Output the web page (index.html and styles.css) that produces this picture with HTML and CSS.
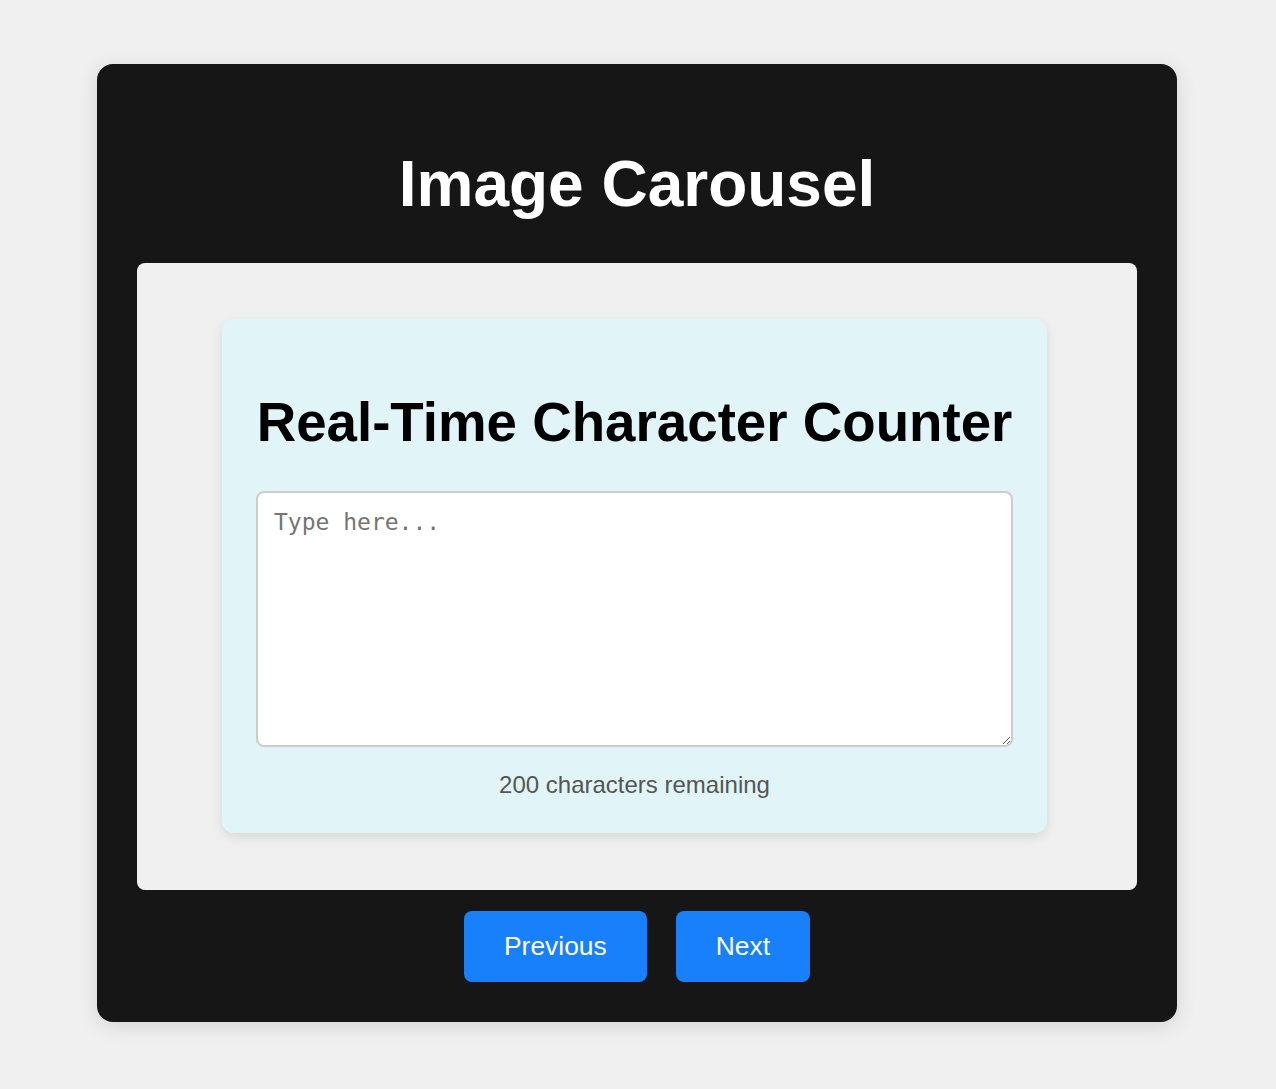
FILE: index.html
```html
<!DOCTYPE html>
<html lang="en">
<head>
<meta charset="utf-8">
<title>Image Carousel</title>
<link rel="stylesheet" href="styles.css">
</head>
<body>
  <div class="carousel">
    <h1 class="carousel-title">Image Carousel</h1>
    <div class="slide">
      <div class="counter-card">
        <h1 class="counter-title">Real-Time Character Counter</h1>
        <textarea class="counter-input" placeholder="Type here..." maxlength="200"></textarea>
        <p class="counter-remaining">200 characters remaining</p>
      </div>
    </div>
    <div class="controls">
      <button class="nav-btn">Previous</button>
      <button class="nav-btn">Next</button>
    </div>
  </div>
</body>
</html>
```

FILE: styles.css
```css
html, body {
  margin: 0;
  padding: 0;
}
body {
  background: #f0f0f0;
  font-family: "Liberation Sans", Arial, sans-serif;
  padding: 64px 2px 67px 0;
}
.carousel {
  width: 1080px;
  box-sizing: border-box;
  margin: 0 auto;
  padding: 40px;
  background: #161616;
  border-radius: 16px;
  box-shadow: 0 4px 20px rgba(0, 0, 0, 0.12);
}
.carousel-title {
  margin: 43px 0 42.4px;
  font-size: 64px;
  font-weight: bold;
  color: #ffffff;
  text-align: center;
}
.slide {
  height: 627px;
  box-sizing: border-box;
  padding: 56px 90px 59px 85px;
  margin-bottom: 21px;
  background: #f0f0f0;
  border-radius: 8px;
}
.counter-card {
  background: #e1f5f9;
  border-radius: 12px;
  padding: 0 34px 34px;
  box-shadow: 0 4px 12px rgba(0, 0, 0, 0.1);
  display: flow-root;
}
.counter-title {
  margin: 71px 0 36.5px;
  font-size: 54.7px;
  font-weight: bold;
  color: #000;
  text-align: center;
  white-space: nowrap;
}
.counter-input {
  display: block;
  width: 100%;
  height: 256px;
  box-sizing: border-box;
  border: 2px solid #cccccc;
  border-radius: 8px;
  padding: 16px;
  font-family: "DejaVu Sans Mono", monospace;
  font-size: 23px;
  background: #fff;
  resize: both;
}
.counter-input::placeholder {
  color: #757575;
}
.counter-remaining {
  margin: 24px 0 0;
  font-size: 24px;
  color: #555555;
  text-align: center;
}
.controls {
  display: flex;
  justify-content: center;
  gap: 29px;
}
.nav-btn {
  font-family: "Liberation Sans", Arial, sans-serif;
  font-size: 26.4px;
  color: #fff;
  background: #1780fa;
  border: none;
  border-radius: 8px;
  padding: 20px 40px;
  cursor: pointer;
}
```
